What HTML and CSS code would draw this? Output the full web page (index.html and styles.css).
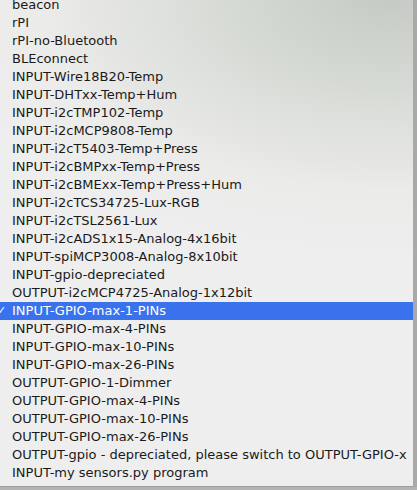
FILE: index.html
```html
<!DOCTYPE html>
<html lang="en">
<head>
    <meta charset="UTF-8">
    <title>Sensor type</title>
    <link rel="stylesheet" href="styles.css">
</head>
<body>
    <!-- popup list of sensor types -->
    <ul class="menu">
        <li>beacon</li>
        <li>rPI</li>
        <li>rPI-no-Bluetooth</li>
        <li>BLEconnect</li>
        <li>INPUT-Wire18B20-Temp</li>
        <li>INPUT-DHTxx-Temp+Hum</li>
        <li>INPUT-i2cTMP102-Temp</li>
        <li>INPUT-i2cMCP9808-Temp</li>
        <li>INPUT-i2cT5403-Temp+Press</li>
        <li>INPUT-i2cBMPxx-Temp+Press</li>
        <li>INPUT-i2cBMExx-Temp+Press+Hum</li>
        <li>INPUT-i2cTCS34725-Lux-RGB</li>
        <li>INPUT-i2cTSL2561-Lux</li>
        <li>INPUT-i2cADS1x15-Analog-4x16bit</li>
        <li>INPUT-spiMCP3008-Analog-8x10bit</li>
        <li>INPUT-gpio-depreciated</li>
        <li>OUTPUT-i2cMCP4725-Analog-1x12bit</li>
        <li class="selected"><span class="check">✓</span>INPUT-GPIO-max-1-PINs</li>
        <li>INPUT-GPIO-max-4-PINs</li>
        <li>INPUT-GPIO-max-10-PINs</li>
        <li>INPUT-GPIO-max-26-PINs</li>
        <li>OUTPUT-GPIO-1-Dimmer</li>
        <li>OUTPUT-GPIO-max-4-PINs</li>
        <li>OUTPUT-GPIO-max-10-PINs</li>
        <li>OUTPUT-GPIO-max-26-PINs</li>
        <li>OUTPUT-gpio - depreciated, please switch to OUTPUT-GPIO-x</li>
        <li>INPUT-my sensors.py program</li>
    </ul>
    <div class="below"></div>
</body>
</html>
```

FILE: styles.css
```css
/* menu look */
html, body {
    margin: 0;
    padding: 0;
    height: 100%;
    overflow: hidden;
    background-color: #a9a9a9;
}

.menu {
    list-style: none;
    margin: 0;
    padding: 0 0 4px 0;
    margin-top: -4px;
    width: 413px;
    background: radial-gradient(ellipse 460px 260px at 390px 0px, #c5cbc4 0%, #d6dad4 35%, #ebebea 75%, #eeeeee 100%);
    border-bottom: 1px solid #9c9c9c;
    font-family: "DejaVu Sans", Verdana, sans-serif;
    font-size: 13px;
    color: #1a1a1a;
}

.menu li {
    height: 18px;
    line-height: 18px;
    padding-left: 12px;
    white-space: nowrap;
    position: relative;
}

.menu li.selected {
    background-color: #3a72ee;
    color: #fff;
}

/* checkmark sits partly off the left edge */
.check {
    position: absolute;
    left: -3px;
    top: 0;
    font-size: 11px;
}

.below {
    height: 10px;
    background-color: #b3b3b3;
}
```
